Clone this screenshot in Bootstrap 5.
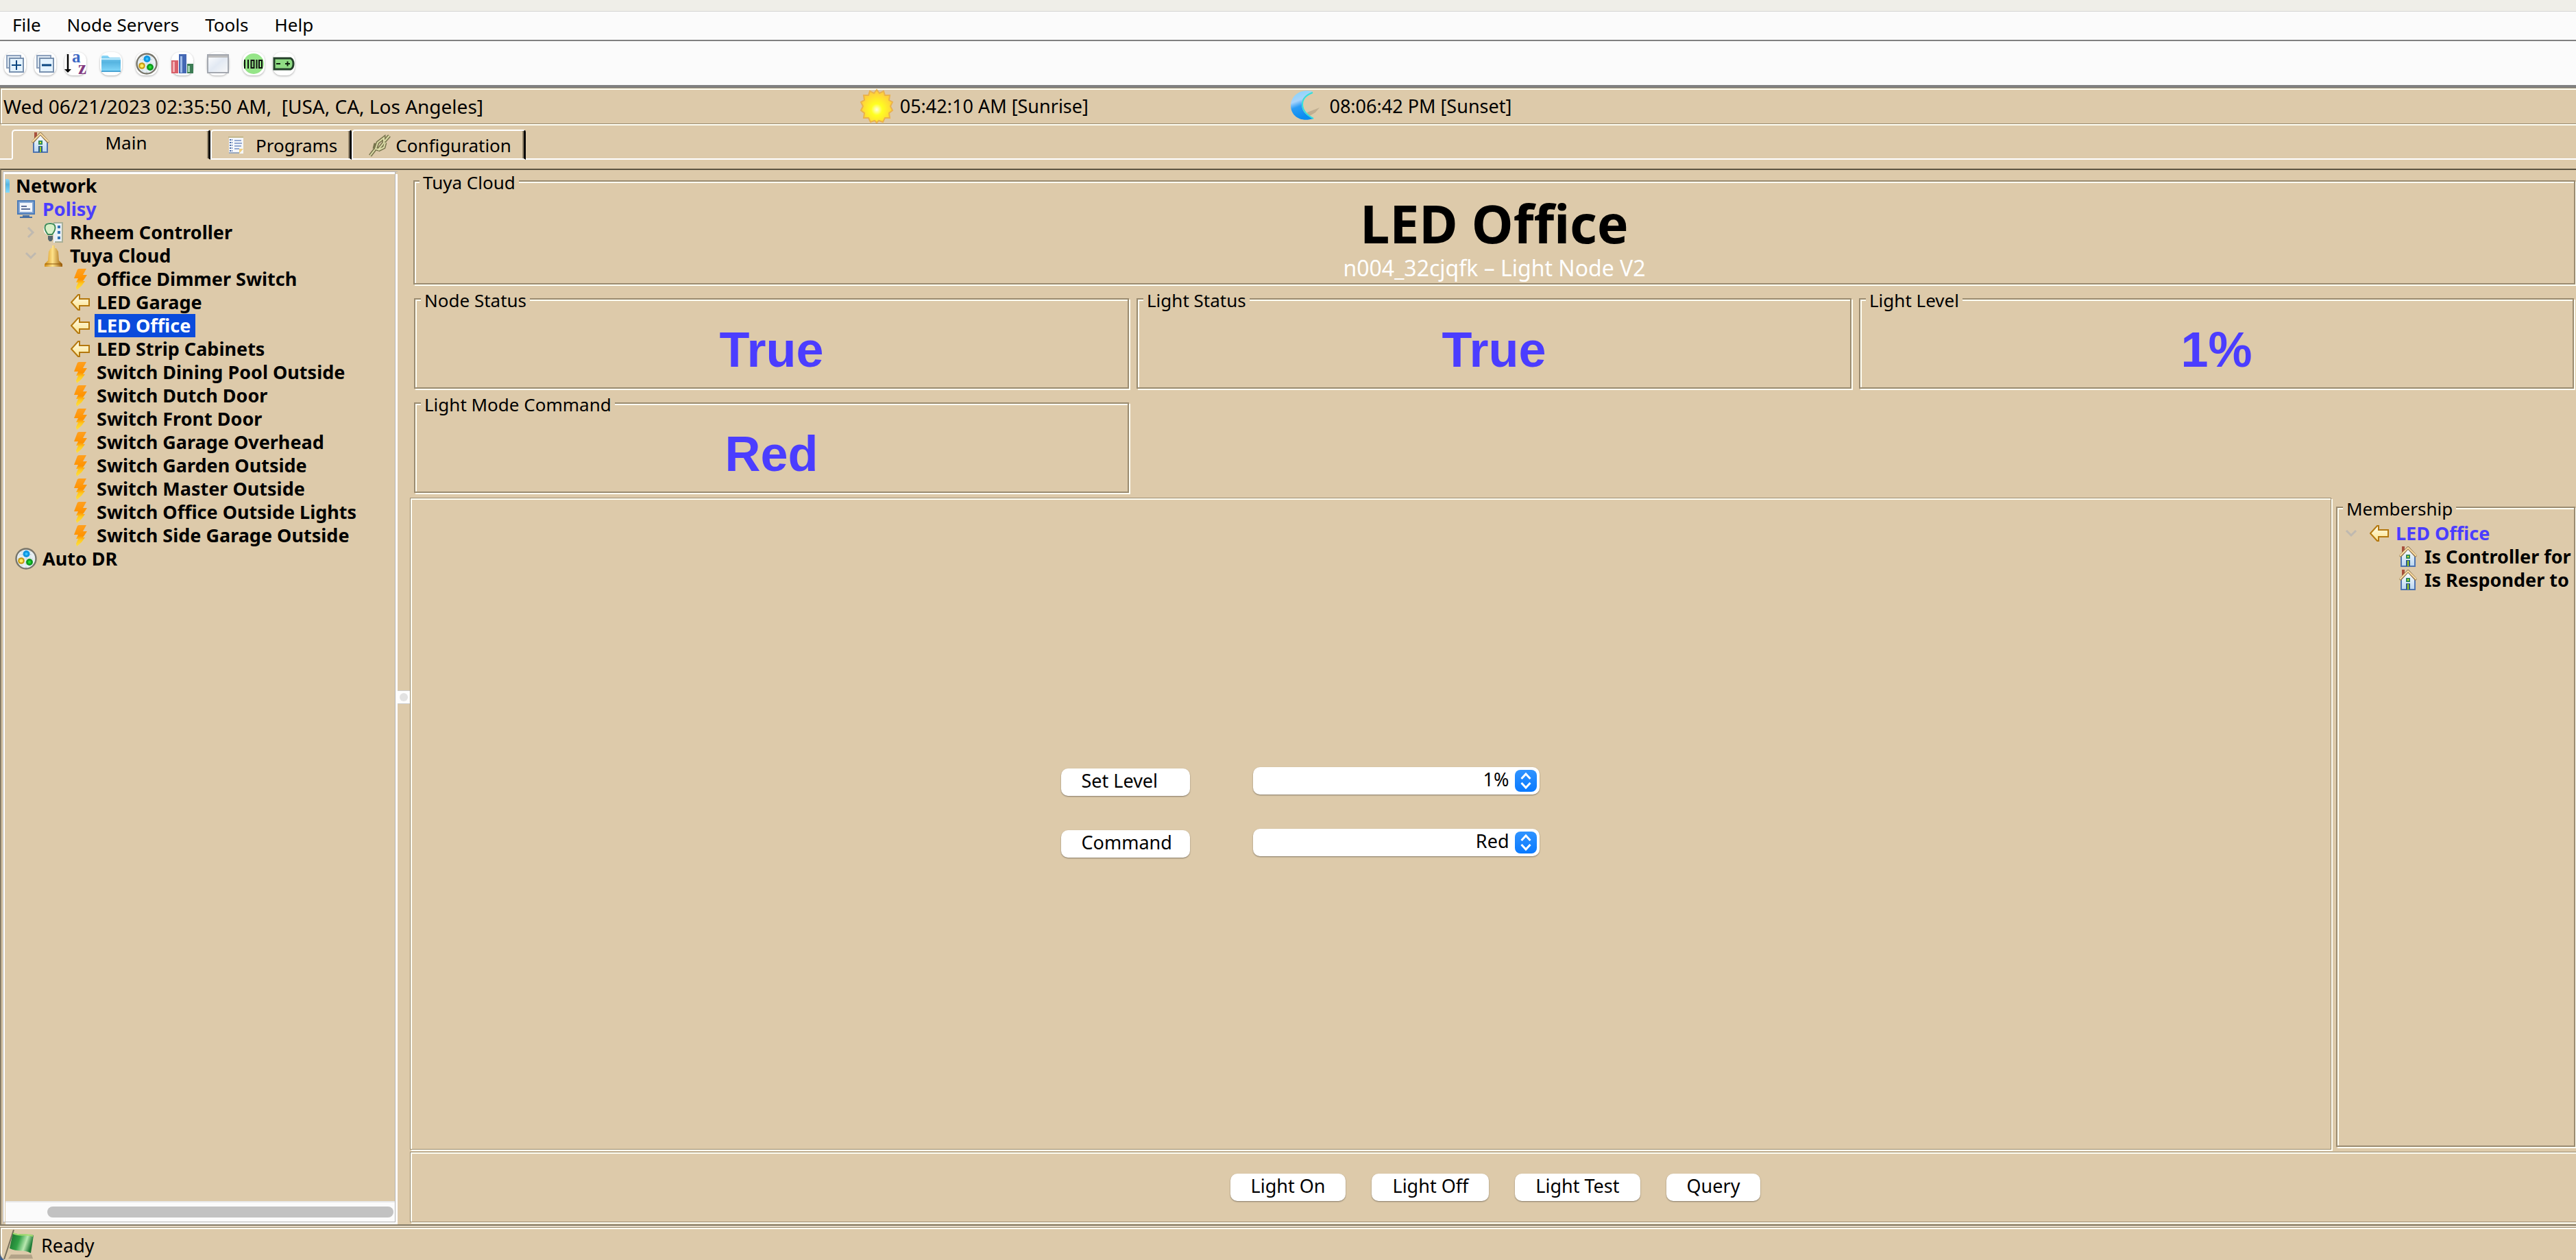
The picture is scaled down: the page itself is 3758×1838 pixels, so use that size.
<!DOCTYPE html>
<html lang="en">
<head>
<meta charset="utf-8">
<meta name="viewport" content="width=device-width, initial-scale=1">
<title>Administrative Console</title>
<link href="https://cdn.jsdelivr.net/npm/bootstrap@5.3.0/dist/css/bootstrap.min.css" rel="stylesheet">
<style>
:root{--tan:#ddcaaa;--olive:#9a8b70;--ivory:#fffff4;--violet:#4b3dff}
body{background:#3d5f8f;color:#000;font-family:"Noto Sans","Open Sans",sans-serif;font-size:27px;line-height:34px}
svg{display:block;flex:none;overflow:visible}
.app{background:var(--tan)}
.titlestrip{height:17px;background:#efeee8;border-bottom:1px solid #d5d5d5}
.menus{height:43px;background:#fbfbfb;border-bottom:2px solid #808080;padding:0 18px 3px;gap:38px;font-size:26px}
.menus a{color:#000;text-decoration:none}
.tools{height:68px;background:#fbfbfb;border-bottom:4px solid #808080;padding:2px 6px 0}
.tool{width:32px;height:34px;padding:0;border:0;border-radius:12px;background:#fff;box-shadow:0 1px 3px rgba(0,0,0,.3);display:flex;align-items:center;justify-content:center;margin-right:12px}
.tool.wide{margin-right:20px}
.etch{border:2px solid var(--olive);box-shadow:inset 2px 2px 0 var(--ivory),2px 2px 0 var(--ivory)}
.etch.thin{border-width:1px}
.clock{height:53px;padding-left:4px;white-space:pre;border-right:0!important}
.clock .c1{width:33.3%;font-size:28px}
.clock .c2{width:16.7%}
.clock .gap8{gap:10px}
.tabrow{padding-top:8px;height:65px}
.tabrow .edge{border-bottom:2px solid #fff;height:44px}
.tabrow .lead-in{width:17px}
.vtab{height:44px;font-size:26px;background:none;border:2px solid #fff;border-right:3px solid #000;border-radius:5px 4px 0 0;padding:2px 18px 0 24px;display:flex;align-items:center;box-shadow:inset -2px 0 0 var(--olive)}
.vtab.active{border-bottom-color:transparent;width:290px;padding:0 8px 6px 27px}
.workarea{border-top:2px solid #5b5341;border-left:2px solid #857b66;min-height:0}
.sidebar{width:576px;margin:2px 0 0 2px;border:1px solid #b5b5b5;border-width:1px 0 0 1px}
.sidebox{border:1px solid #b5b5b5;border-left:0;border-top:0;box-shadow:inset 2px 3px 0 #fff,3px 3px 0 #fff;margin:0 3px 3px 0;padding:3px 0 0 3px}
.tree,.tree ul{list-style:none;margin:0;padding:0;font-weight:700;white-space:nowrap}
.node{height:34px;display:flex;align-items:center}
.node .slot{display:flex;justify-content:center;width:30px}
.node .name{padding:0 4px 0 3px;margin-left:6px}
.node .twist{width:20px;margin-right:8px;display:flex;justify-content:center}
.lv1{padding-left:15px}.lv2{padding-left:27px}.lv3{padding-left:94px}
.picked{background:#0a4bdc;color:#fff;padding-right:7px!important}
.own{color:var(--violet)}
.hbar{height:30px;background:#fbfbfb;border-top:2px solid #e8e8e8;padding:6px 2px 0 61px}
.hbar div{height:16px;border-radius:8px;background:#c2c2c2}
.divider{width:18px}
.grip{width:18px;height:20px;border:solid #ccc;border-width:1px 0;background:#fdfdfd;padding:0;display:flex;align-items:center;justify-content:center}
.grip span{width:12px;height:12px;border-radius:50%;background:#e2e2e2}
.framed{min-width:0;margin:0;padding:0}
.framed>legend{float:none;width:auto;margin:0 0 0 8px;padding:4px 5px 0;font-size:26px;line-height:28px;background:var(--tan)}
.head{height:167px;margin:0 1px 0 5px}
.head legend{margin-left:7px}
.head h1{font-size:77px;font-weight:700;line-height:92px;margin:0}
.head p{font-size:32px;line-height:38px;color:#fff;margin:0}
.stats{display:grid;grid-template-columns:repeat(3,1fr);gap:5px 11px;margin:5px 3px 7px 6px}
.stats fieldset{height:147px}
.stats output{display:block;text-align:center;font:700 72px/84px "Liberation Sans",Arial,sans-serif;color:var(--violet);margin-top:16px}
.controls{padding:0 206px 32px 0}
.ctl{display:grid;grid-template-columns:188px 418px;gap:50px 92px}
.mac{height:40px;border:0;border-radius:10px;background:#fff;color:#000;box-shadow:0 1px 2px rgba(0,0,0,.4);padding:0 30px 4px;font-size:27px;line-height:34px;text-align:left}
.drop{position:relative;top:-2px}
.drop select{appearance:none;width:100%;padding:0 44px 3px 10px;text-align:right;text-align-last:right}
.drop svg{position:absolute;right:4px;top:4px;pointer-events:none}
.member{width:349px;margin:-2px 1px 4px 7px}
.member .tree{padding-top:5px}
.member .lv1{padding-left:10px}.member .lv2{padding-left:88px}
.actions{height:103px;margin:3px 0 3px;gap:38px;padding-left:6px;border-right:0!important}
.status{height:48px;padding:1px 0 0 3px;border-bottom-left-radius:10px;border-right:0!important;border-bottom:0!important;background:var(--tan)}
.status span{padding-top:3px}
.sill{border-top:2px solid #857b66;border-bottom:2px solid #e8dbc8;height:4px;background:var(--tan)}
</style>
<script src="https://cdn.jsdelivr.net/npm/bootstrap@5.3.0/dist/js/bootstrap.bundle.min.js"></script>
</head>
<body>
<svg width="0" height="0" class="position-absolute" aria-hidden="true">
<defs>
<linearGradient id="gFold" x2="0" y2="1"><stop offset="0" stop-color="#8ed8f8"/><stop offset=".4" stop-color="#56b4e0"/><stop offset="1" stop-color="#84dafc"/></linearGradient>
<linearGradient id="gBolt" x2="0" y2="1"><stop offset="0" stop-color="#ffa020"/><stop offset=".5" stop-color="#ff9200"/><stop offset=".7" stop-color="#ffc820"/><stop offset="1" stop-color="#ffe040"/></linearGradient>
<linearGradient id="gArrow" x2="0" y2="1"><stop offset="0" stop-color="#fffbe8"/><stop offset="1" stop-color="#fbe38c"/></linearGradient>
<linearGradient id="gBell"><stop offset="0" stop-color="#d08a10"/><stop offset=".45" stop-color="#ffe38a"/><stop offset="1" stop-color="#9a5a06"/></linearGradient>
<linearGradient id="gHouse" x2="0" y2="1"><stop offset="0" stop-color="#fff"/><stop offset="1" stop-color="#b9d6f0"/></linearGradient>
<radialGradient id="gSun" cy=".6"><stop offset="0" stop-color="#fffde0"/><stop offset=".35" stop-color="#ffff20"/><stop offset="1" stop-color="#ffd23a"/></radialGradient>
<linearGradient id="gMoon" x2=".3" y2="1"><stop offset="0" stop-color="#7fd4fa"/><stop offset=".4" stop-color="#a9d4fb"/><stop offset=".6" stop-color="#2a9cf5"/><stop offset="1" stop-color="#0a8cf0"/></linearGradient>
<linearGradient id="gFlag" x2="1" y2=".3"><stop offset="0" stop-color="#1a6a2c"/><stop offset=".45" stop-color="#2fa044"/><stop offset=".75" stop-color="#b9e8b0"/><stop offset="1" stop-color="#1d7a34"/></linearGradient>
<linearGradient id="gStep" x2="0" y2="1"><stop offset="0" stop-color="#2f93ff"/><stop offset="1" stop-color="#0a7aff"/></linearGradient>
<linearGradient id="gWin" x2="1" y2="1"><stop offset="0" stop-color="#fff"/><stop offset=".5" stop-color="#e2e9f3"/><stop offset="1" stop-color="#f8f8f8"/></linearGradient>
</defs>
<symbol id="house" viewBox="0 0 26 30"><path d="M4 0h4v6l-4 4z" fill="#a8503c"/><path d="M13 3 23 14v15H3V14z" fill="url(#gHouse)"/><path d="M3 15v14h20V15" fill="none" stroke="#4d73b0" stroke-width="2"/><path d="M1 15 13 2l12 13" fill="none" stroke="#8d7552" stroke-width="4"/><path d="M1 14 13 2l12 12" fill="none" stroke="#fbdca0" stroke-width="2"/><path d="M10 12h6v6h-6z" fill="#2f8a5a"/><path d="M12 14h2v2h-2z" fill="#e4ee20"/><path d="M10 20h6v9h-6z" fill="#2a5a8a"/><path d="M12 21h2v8h-2z" fill="#9ccc20"/></symbol>
<symbol id="arrow" viewBox="0 0 28 24"><path d="M1 12 11 1h2v6h14v10H13v6h-2z" fill="url(#gArrow)" stroke="#b4780e" stroke-width="2"/></symbol>
<symbol id="bolt" viewBox="0 0 20 31"><path d="M8 0h11l-5 9h6l-6 9h3l-5 7-7 6-1-4 3-7H4l3-6H1l5-13z" fill="url(#gBolt)"/></symbol>
<symbol id="scene" viewBox="0 0 32 32"><circle cx="16" cy="16" r="14.5" fill="#e6eef2" stroke="#77756a" stroke-width="2.4"/><path d="M6 10h20M4 16h24M6 22h20M10 5v22M16 3v26M22 5v22" stroke="#c4d4dc" stroke-width="1" stroke-dasharray="2 2"/><circle cx="16.500" cy="9" r="5" fill="#1096e0"/><circle cx="16.500" cy="9" r="2" fill="#38c4ff"/><circle cx="9" cy="19" r="4.800" fill="#c89a10"/><circle cx="9" cy="19" r="2.600" fill="#ffec60"/><circle cx="21" cy="21" r="5" fill="#0f9a20"/><circle cx="21" cy="21" r="2.200" fill="#20e030"/></symbol>
</svg>

<div class="d-flex flex-column vh-100 overflow-hidden">
<div class="app">
<header>
<div class="titlestrip"></div>
<nav class="menus d-flex align-items-center" aria-label="Menu"><a href="#">File</a><a href="#">Node Servers</a><a href="#">Tools</a><a href="#">Help</a></nav>
<div class="tools d-flex align-items-center" role="toolbar">
<button class="tool" aria-label="Expand all"><svg width="26" height="26"><path d="M1 1h20v18H1z" fill="#dfe9f2" stroke="#8ea2bd" stroke-width="2"/><path d="M5 5h20v20H5z" fill="#e4f3ff" stroke="#7890ae" stroke-width="2"/><path d="M8 15h14M15 8v14" stroke="#0a4680" stroke-width="2"/></svg></button>
<button class="tool" aria-label="Collapse all"><svg width="26" height="26"><path d="M1 1h20v18H1z" fill="#dfe9f2" stroke="#8ea2bd" stroke-width="2"/><path d="M5 5h20v20H5z" fill="#e4f3ff" stroke="#7890ae" stroke-width="2"/><path d="M8 15h14" stroke="#0a4680" stroke-width="3"/></svg></button>
<button class="tool wide" aria-label="Sort"><svg width="32" height="32"><path d="M5 2v23" stroke="#000" stroke-width="2.500"/><path d="M0 24h10l-5 5z"/><text x="11" y="14" font-family="Liberation Serif" font-weight="700" font-size="25" fill="#3d68c4">a</text><text x="20" y="31" font-family="Liberation Serif" font-weight="700" font-size="27" fill="#833a80">z</text></svg></button>
<button class="tool wide" aria-label="Folder"><svg width="30" height="26"><path d="M1 3q0-2 2-2h7l3 3h14q2 0 2 2v17q0 2-2 2H3q-2 0-2-2z" fill="url(#gFold)"/><path d="M1 6h28" stroke="#c4ecfc" stroke-width="2"/><path d="M1 24h28" stroke="#4aa4d4" stroke-width="2"/></svg></button>
<button class="tool wide" aria-label="Scenes"><svg width="32" height="32"><use href="#scene"/></svg></button>
<button class="tool wide" aria-label="Chart"><svg width="32" height="28"><path d="M0 9h10v19H0z" fill="#d8606a"/><path d="M2 11h3v15H2z" fill="#f4b0b4"/><path d="M11 0h11v28H11z" fill="#4468b4"/><path d="M13 3h3v24h-3z" fill="#a0bce8"/><path d="M23 14h9v14h-9z" fill="#3c7c54"/><path d="M24 17h3v9h-3z" fill="#a4d4b0"/></svg></button>
<button class="tool wide" aria-label="Window"><svg width="32" height="28"><path d="M1 1h30v26H1z" fill="url(#gWin)" stroke="#a4a8b0" stroke-width="2"/><path d="M2 2h28v3H2z" fill="#bdbdbd"/></svg></button>
<button class="tool" aria-label="Raw data"><svg width="32" height="32"><circle cx="16" cy="16" r="15" fill="#95e588"/><path d="M3 10v13M8 10v13M20.500 10v13" stroke="#111" stroke-width="2"/><path d="M12.500 11h4v11h-4zM24 11h4v11h-4z" fill="none" stroke="#111" stroke-width="2"/></svg></button>
<button class="tool" aria-label="Battery"><svg width="32" height="20"><path d="M2 2h24q4 2 4 8t-4 8H2z" fill="#90dc84" stroke="#24402a" stroke-width="3"/><path d="M5 10h6M18 10h7M21.500 6.500v7" stroke="#10220f" stroke-width="2"/></svg></button>
</div>
</header>
<div class="clock etch thin d-flex align-items-center">
<div class="c1">Wed 06/21/2023 02:35:50 AM,  [USA, CA, Los Angeles]</div>
<div class="c2 gap8 d-flex align-items-center"><svg width="48" height="48" viewBox="0 0 48 48"><path d="M24 0l4 5 6-3 2 6 7 0-1 7 5 3-3 6 3 6-5 4 1 7-7 0-3 6-6-2-3 3-3-3-6 2-3-6-7 0 1-7-5-4 3-6-3-6 5-3-1-7 7 0 2-6 6 3z" fill="url(#gSun)" stroke="#eab24c" stroke-width="2"/></svg><span>05:42:10 AM [Sunrise]</span></div>
<div class="gap8 d-flex align-items-center"><svg width="48" height="48" viewBox="0 0 48 48"><path d="M26 33l18-7-6 7-10 6z" fill="#b3a388" opacity=".7"/><path d="M34 2C14-2 2 10 2 23c0 15 14 25 33 19C22 36 18 30 18 20c0-8 6-13 16-18z" fill="url(#gMoon)"/><path d="M34 4C23 8 19 14 19 21c0 9 5 15 16 21" fill="none" stroke="#2fe0e0" stroke-width="2"/></svg><span>08:06:42 PM [Sunset]</span></div>
</div>
<div class="tabrow d-flex" role="tablist">
<div class="edge lead-in"></div>
<button class="vtab active" role="tab" aria-selected="true"><svg width="26" height="30"><use href="#house"/></svg><span class="flex-fill">Main</span></button>
<button class="vtab" role="tab"><svg width="24" height="26" class="me-3"><path d="M1 1h21v24H1z" fill="#f4f7fb"/><path d="M0 0h22v2H0z" fill="#c4b88c"/><path d="M2 5h4M2 9h4M2 13h4M2 17h4M2 21h4" stroke="#4668a8" stroke-width="2" stroke-dasharray="2 1"/><path d="M9 6h10M9 10h11M9 14h10M9 18h7" stroke="#93a8d0" stroke-width="2"/><path d="M1 24h15" stroke="#9aa8bc" stroke-width="2"/><path d="M16 25v-7h6z" fill="#f0cf80"/></svg>Programs</button>
<button class="vtab" role="tab"><svg width="30" height="31" class="me-2"><g fill="none" stroke="#77744c" stroke-width="5"><path d="M1 30l7-9M22 9l7-8"/><path d="M9 20l3-9 9-7v7l-8 10zM13 22l8-4 2-7M9 12l-2 8"/></g><g fill="none" stroke="#dcdca8" stroke-width="2"><path d="M1 30l7-9M22 9l7-8"/><path d="M9 20l3-9 9-7v7l-8 10zM13 22l8-4 2-7"/></g></svg>Configuration</button>
<div class="edge flex-fill"></div>
</div>
</div>

<main class="app workarea d-flex flex-fill">
<aside class="sidebar d-flex flex-column flex-shrink-0">
<div class="sidebox d-flex flex-column flex-fill">
<ul class="tree flex-fill">
<li><div class="node"><svg width="6" height="20"><path d="M0 0h4l2 2v18H0z" fill="url(#gFold)"/></svg><span class="name">Network</span></div></li>
<li><div class="node lv1"><span class="slot"><svg width="26" height="26"><path d="M0 0h26v21H0z" fill="#4a7ab8"/><path d="M3 3h20v15H3z" fill="#f2f5fb" stroke="#86a8d4" stroke-width="2"/><path d="M6 9h8M6 13h13" stroke="#5c6f98" stroke-width="2"/><path d="M8 22h10v2h4v2H4v-2h4z" fill="#456fa4"/></svg></span><span class="name own">Polisy</span></div>
<ul>
<li><div class="node lv2"><span class="twist"><svg width="10" height="16"><path d="M1 1l7 7-7 7" fill="none" stroke="#bfb9b0" stroke-width="3"/></svg></span><span class="slot"><svg width="28" height="30"><path d="M14 0h14v30H14z" fill="#eaf0f5"/><path d="M14 1h13v28H16" fill="none" stroke="#a9b098" stroke-width="2"/><path d="M20 5h4v4h-4zM20 13h4v4h-4zM20 21h4v4h-4z" fill="#3474b4"/><circle cx="9" cy="10" r="9.500" fill="#fff"/><path d="M9 2c-10 0-9 9-3 16h6c6-7 7-16-3-16z" fill="#d8f0c8" stroke="#3f8a58" stroke-width="2"/><path d="M6 20h7v5l-2 3H8l-2-3z" fill="#56666e"/></svg></span><span class="name">Rheem Controller</span></div></li>
<li><div class="node lv2"><span class="twist"><svg width="16" height="10"><path d="M1 1l7 7 7-7" fill="none" stroke="#bfb9b0" stroke-width="3"/></svg></span><span class="slot"><svg width="26" height="31"><path d="M11 0h4v4h2l3 5 1 13 5 5v4H0v-4l5-5L6 9l3-5h2z" fill="url(#gBell)"/><path d="M1 27h24" stroke="#8a5208" stroke-width="1"/></svg></span><span class="name">Tuya Cloud</span></div>
<ul>
<li><div class="node lv3"><span class="slot"><svg width="20" height="31"><use href="#bolt"/></svg></span><span class="name">Office Dimmer Switch</span></div></li>
<li><div class="node lv3"><span class="slot"><svg width="28" height="24"><use href="#arrow"/></svg></span><span class="name">LED Garage</span></div></li>
<li><div class="node lv3"><span class="slot"><svg width="28" height="24"><use href="#arrow"/></svg></span><span class="name picked">LED Office</span></div></li>
<li><div class="node lv3"><span class="slot"><svg width="28" height="24"><use href="#arrow"/></svg></span><span class="name">LED Strip Cabinets</span></div></li>
<li><div class="node lv3"><span class="slot"><svg width="20" height="31"><use href="#bolt"/></svg></span><span class="name">Switch Dining Pool Outside</span></div></li>
<li><div class="node lv3"><span class="slot"><svg width="20" height="31"><use href="#bolt"/></svg></span><span class="name">Switch Dutch Door</span></div></li>
<li><div class="node lv3"><span class="slot"><svg width="20" height="31"><use href="#bolt"/></svg></span><span class="name">Switch Front Door</span></div></li>
<li><div class="node lv3"><span class="slot"><svg width="20" height="31"><use href="#bolt"/></svg></span><span class="name">Switch Garage Overhead</span></div></li>
<li><div class="node lv3"><span class="slot"><svg width="20" height="31"><use href="#bolt"/></svg></span><span class="name">Switch Garden Outside</span></div></li>
<li><div class="node lv3"><span class="slot"><svg width="20" height="31"><use href="#bolt"/></svg></span><span class="name">Switch Master Outside</span></div></li>
<li><div class="node lv3"><span class="slot"><svg width="20" height="31"><use href="#bolt"/></svg></span><span class="name">Switch Office Outside Lights</span></div></li>
<li><div class="node lv3"><span class="slot"><svg width="20" height="31"><use href="#bolt"/></svg></span><span class="name">Switch Side Garage Outside</span></div></li>
</ul></li>
</ul></li>
<li><div class="node lv1"><span class="slot"><svg width="32" height="32"><use href="#scene"/></svg></span><span class="name">Auto DR</span></div></li>
</ul>
<div class="hbar"><div></div></div>
</div>
</aside>
<div class="divider d-flex align-items-center flex-shrink-0"><button class="grip" aria-label="Resize tree"><span></span></button></div>

<section class="d-flex flex-column flex-fill">
<fieldset class="framed etch head text-center"><legend class="text-start">Tuya Cloud</legend>
<h1>LED Office</h1><p>n004_32cjqfk – Light Node V2</p></fieldset>
<div class="stats">
<fieldset class="framed etch"><legend>Node Status</legend><output>True</output></fieldset>
<fieldset class="framed etch"><legend>Light Status</legend><output>True</output></fieldset>
<fieldset class="framed etch"><legend>Light Level</legend><output>1%</output></fieldset>
<fieldset class="framed etch"><legend>Light Mode Command</legend><output>Red</output></fieldset>
</div>
<div class="d-flex flex-fill">
<form class="controls etch thin flex-fill d-flex align-items-center justify-content-center">
<div class="ctl">
<button type="button" class="mac" id="lblLevel">Set Level</button>
<div class="drop"><select class="mac" aria-labelledby="lblLevel"><option>1%</option></select><svg width="32" height="32"><rect width="32" height="32" rx="8" fill="url(#gStep)"/><path d="M9.500 13l6.500-7 6.500 7M9.500 19l6.500 7 6.500-7" fill="none" stroke="#fff" stroke-width="3"/></svg></div>
<button type="button" class="mac" id="lblCommand">Command</button>
<div class="drop"><select class="mac" aria-labelledby="lblCommand"><option>Red</option></select><svg width="32" height="32"><rect width="32" height="32" rx="8" fill="url(#gStep)"/><path d="M9.500 13l6.500-7 6.500 7M9.500 19l6.500 7 6.500-7" fill="none" stroke="#fff" stroke-width="3"/></svg></div>
</div>
</form>
<fieldset class="framed etch member flex-shrink-0"><legend>Membership</legend>
<ul class="tree">
<li><div class="node lv1"><span class="twist"><svg width="16" height="10"><path d="M1 1l7 7 7-7" fill="none" stroke="#bfb9b0" stroke-width="3"/></svg></span><span class="slot ms-2"><svg width="28" height="24"><use href="#arrow"/></svg></span><span class="name own">LED Office</span></div>
<ul>
<li><div class="node lv2"><span class="slot"><svg width="26" height="30"><use href="#house"/></svg></span><span class="name">Is Controller for</span></div></li>
<li><div class="node lv2"><span class="slot"><svg width="26" height="30"><use href="#house"/></svg></span><span class="name">Is Responder to</span></div></li>
</ul></li>
</ul></fieldset>
</div>
<div class="actions etch thin d-flex align-items-center justify-content-center">
<button class="mac">Light On</button><button class="mac">Light Off</button><button class="mac">Light Test</button><button class="mac">Query</button>
</div>
</section>
</main>
<div class="sill"></div>
<footer class="status etch thin d-flex align-items-center"><svg width="48" height="44" viewBox="0 0 48 44"><path d="M12 37h30l2 6H8z" fill="#b3a388"/><path d="M2 44 16 1" stroke="#77705c" stroke-width="2"/><path d="M15 5c10 5 20 0 30 4l-4 26c-9-6-20-1-31-7z" fill="url(#gFlag)"/><path d="M15 6c10 5 19 0 29 4" stroke="#a8dc70" stroke-width="2" fill="none"/></svg><span class="ms-2">Ready</span></footer>
</div>
</body>
</html>
